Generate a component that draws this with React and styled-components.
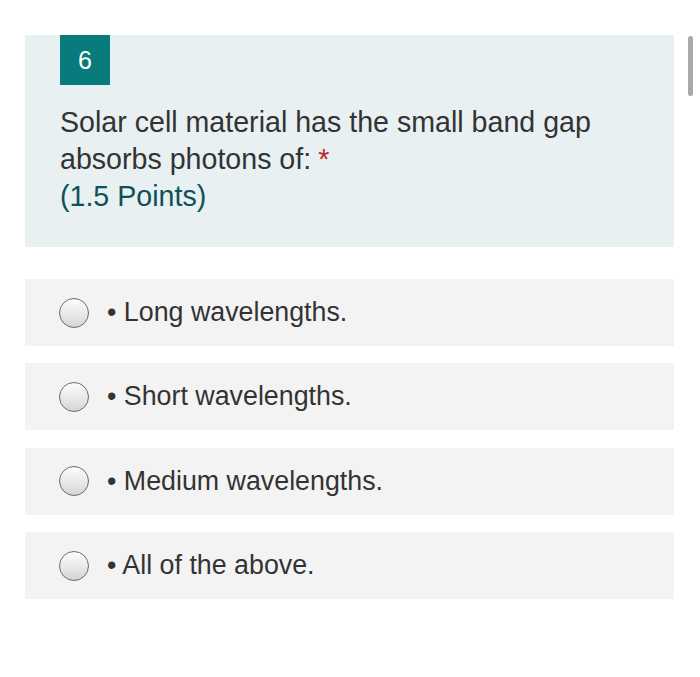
import React from 'react'
import styled, { createGlobalStyle } from 'styled-components'

const GlobalStyle = createGlobalStyle`
  html, body {
    margin: 0;
    padding: 0;
    background: #ffffff;
    font-family: "Liberation Sans", Arial, sans-serif;
  }
`;

const Page = styled.div`
  width: 700px;
  height: 677px;
  position: relative;
  overflow: hidden;
  background: #fff;
  padding: 35px 26px 0 25px;
  box-sizing: border-box;
  display: flex;
  flex-direction: column;
  gap: 32px;
`;

const Scrollbar = styled.div`
  position: absolute;
  top: 36px;
  right: 7px;
  width: 5px;
  height: 60px;
  border-radius: 3px;
  background: #a9a9a9;
`;

const QuestionCard = styled.div`
  background: #e8f0f1;
  height: 212px;
  padding: 0 35px;
  box-sizing: border-box;
`;

const Badge = styled.div`
  width: 50px;
  height: 50px;
  background: #087b7c;
  color: #fff;
  font-size: 25px;
  display: flex;
  align-items: center;
  justify-content: center;
`;

const QuestionText = styled.div`
  margin-top: 18.5px;
  font-size: 28.6px;
  line-height: 37.3px;
  color: #333;
`;

const Required = styled.span`
  color: #c4262e;
  margin-left: 7px;
`;

const Points = styled.div`
  color: #0c5258;
`;

const Options = styled.div`
  display: flex;
  flex-direction: column;
  gap: 17.4px;
`;

const Option = styled.label`
  background: #f3f3f3;
  height: 67px;
  display: flex;
  align-items: center;
  padding-left: 34px;
  gap: 18px;
  font-size: 26.8px;
  color: #333;
`;

const Radio = styled.span`
  width: 28px;
  height: 28px;
  border-radius: 50%;
  border: 1.5px solid #6b6b6b;
  background: linear-gradient(180deg, #fdfdfd 0%, #e6e6e6 60%, #d4d4d4 100%);
  flex-shrink: 0;
`;

const options = [
  'Long wavelengths.',
  'Short wavelengths.',
  'Medium wavelengths.',
  'All of the above.',
];

export default function App() {
  return (
    <>
      <GlobalStyle />
      <Page>
        <Scrollbar />
        <QuestionCard>
          <Badge>6</Badge>
          <QuestionText>
            Solar cell material has the small band gap
            <br />
            absorbs photons of:<Required>*</Required>
            <Points>(1.5 Points)</Points>
          </QuestionText>
        </QuestionCard>
        <Options>
          {options.map((o) => (
            <Option key={o}>
              <Radio />
              <span>• {o}</span>
            </Option>
          ))}
        </Options>
      </Page>
    </>
  )
}
